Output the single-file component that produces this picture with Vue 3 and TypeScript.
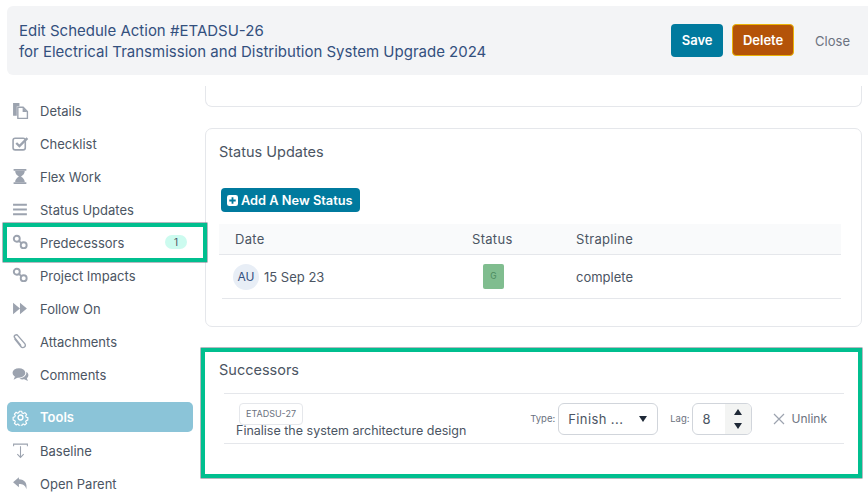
<script setup lang="ts">
interface NavItem {
  label: string
  icon: string
  badge?: string
  marked?: boolean
  active?: boolean
  gap?: boolean
}

const navItems: NavItem[] = [
  { label: 'Details', icon: 'files' },
  { label: 'Checklist', icon: 'check' },
  { label: 'Flex Work', icon: 'hourglass' },
  { label: 'Status Updates', icon: 'bars' },
  { label: 'Predecessors', icon: 'link', badge: '1', marked: true },
  { label: 'Project Impacts', icon: 'link' },
  { label: 'Follow On', icon: 'forward' },
  { label: 'Attachments', icon: 'clip' },
  { label: 'Comments', icon: 'comments' },
  { label: 'Tools', icon: 'cog', active: true, gap: true },
  { label: 'Baseline', icon: 'baseline' },
  { label: 'Open Parent', icon: 'reply' }
]
</script>

<template>
  <div class="page">
    <header class="head">
      <div class="head-title">
        <div>Edit Schedule Action #ETADSU-26</div>
        <div>for Electrical Transmission and Distribution System Upgrade 2024</div>
      </div>
      <div class="head-actions">
        <button class="btn save">Save</button>
        <button class="btn delete">Delete</button>
        <button class="btn close">Close</button>
      </div>
    </header>

    <div class="body">
      <nav class="side">
        <a
          v-for="item in navItems"
          :key="item.label"
          class="nav"
          :class="{ active: item.active, marked: item.marked, gap: item.gap }"
        >
          <svg class="ico" viewBox="0 0 16 16" aria-hidden="true">
            <template v-if="item.icon === 'files'">
              <path d="M1 1h6v3H4.500v9H1z" fill="currentColor" />
              <path d="M5.500 5h5l4 4v6.500h-9z" fill="none" stroke="currentColor" stroke-width="1.300" />
              <path d="M10 5v4.500h4.500" fill="currentColor" />
            </template>
            <template v-else-if="item.icon === 'check'">
              <rect x="1" y="3" width="11.500" height="11" rx="2" fill="none" stroke="currentColor" stroke-width="1.500" />
              <path d="M4 7.500l3 3 7.500-7.500" fill="none" stroke="currentColor" stroke-width="2.200" />
            </template>
            <template v-else-if="item.icon === 'hourglass'">
              <path d="M1.500 1h12v1.500h-12zM1.500 13.500h12V15h-12z" fill="currentColor" />
              <path d="M3 2.500h9C12 6 9.500 7 8.500 8c1 1 3.500 2 3.500 5.500H3C3 10 5.500 9 6.500 8 5.500 7 3 6 3 2.500z" fill="currentColor" />
            </template>
            <template v-else-if="item.icon === 'bars'">
              <path d="M1 2.500h13v2H1zM1 7h13v2H1zM1 11.500h13v2H1z" fill="currentColor" />
            </template>
            <template v-else-if="item.icon === 'link'">
              <circle cx="4.500" cy="4.500" r="2.800" fill="none" stroke="currentColor" stroke-width="1.800" />
              <circle cx="11" cy="10.500" r="2.800" fill="none" stroke="currentColor" stroke-width="1.800" />
              <path d="M6.500 6.500l2.500 2.300" stroke="currentColor" stroke-width="1.800" />
            </template>
            <template v-else-if="item.icon === 'forward'">
              <path d="M1 2.500l6.500 5.500L1 13.500zM7.500 2.500L14 8l-6.500 5.500z" fill="currentColor" />
            </template>
            <template v-else-if="item.icon === 'clip'">
              <path d="M4 5.500l6 7.500a2.300 2.300 0 0 0 3.500-3L7 2.500A1.700 1.700 0 0 0 4 4.500l6 7.500" fill="none" stroke="currentColor" stroke-width="1.300" transform="translate(-1.500 0)" />
            </template>
            <template v-else-if="item.icon === 'comments'">
              <ellipse cx="6.500" cy="6.500" rx="6" ry="4.500" fill="currentColor" />
              <path d="M3 9.500L1.500 13 6 10.500zM13.500 5.500c2.500 1.500 2.500 4.500.5 6l1 2.500-3.500-1.500c-2 .3-3.500 0-4.500-.8 3.500 0 7-2.500 6.500-6.200z" fill="currentColor" />
            </template>
            <template v-else-if="item.icon === 'cog'">
              <circle cx="8" cy="8" r="2.300" fill="none" stroke="currentColor" stroke-width="1.300" />
              <path d="M6.700 1.500h2.600l.4 1.800 1.300.6 1.600-1 1.800 1.900-1 1.500.6 1.400 1.700.4v2.600l-1.700.4-.6 1.300 1 1.600-1.800 1.800-1.600-1-1.300.6-.4 1.700H6.700l-.4-1.700-1.300-.6-1.600 1-1.800-1.800 1-1.600-.6-1.300-1.700-.4V7.700l1.700-.4.6-1.400-1-1.500 1.800-1.900 1.600 1 1.300-.6z" fill="none" stroke="currentColor" stroke-width="1.200" stroke-linejoin="round" transform="translate(.8 .8) scale(.9)" />
            </template>
            <template v-else-if="item.icon === 'baseline'">
              <path d="M1.500 4V2h13v2M8 4v10.500M5 11.500l3 3 3-3" fill="none" stroke="currentColor" stroke-width="1" />
            </template>
            <template v-else>
              <path d="M6.500 2L1 6.800l5.500 4.700V8.500c3.500 0 6 .8 7 5 1-5.500-1.500-9.500-7-9.500z" fill="currentColor" />
            </template>
          </svg>
          <span class="nav-label">{{ item.label }}</span>
          <span v-if="item.badge" class="badge">{{ item.badge }}</span>
        </a>
      </nav>

      <main class="main">
        <section class="card stub"></section>

        <section class="card status">
          <h2 class="card-title">Status Updates</h2>
          <button class="add">
            <svg class="add-ico" viewBox="0 0 12 12" aria-hidden="true">
              <rect width="12" height="12" rx="2.500" fill="#fff" />
              <path d="M6 2.500v7M2.500 6h7" stroke="#007a9e" stroke-width="2" />
            </svg>
            Add A New Status
          </button>
          <div class="table">
            <div class="row th">
              <span class="c-date head-date">Date</span>
              <span class="c-status">Status</span>
              <span class="c-strap">Strapline</span>
            </div>
            <div class="row td">
              <span class="c-date">
                <span class="avatar">AU</span>
                15 Sep 23
              </span>
              <span class="c-status"><span class="rag">G</span></span>
              <span class="c-strap">complete</span>
            </div>
          </div>
        </section>

        <section class="successors">
          <h2 class="card-title">Successors</h2>
          <div class="succ-row">
            <div class="succ-info">
              <span class="tag">ETADSU-27</span>
              <div class="succ-name">Finalise the system architecture design</div>
            </div>
            <div class="succ-controls">
              <span class="mini">Type:</span>
              <div class="select">
                <span>Finish ...</span>
                <i class="tri down"></i>
              </div>
              <span class="mini lag">Lag:</span>
              <div class="number">
                <span class="num-val">8</span>
                <span class="spin"><i class="tri up"></i><i class="tri down"></i></span>
              </div>
              <span class="unlink">
                <svg class="x" viewBox="0 0 12 12" aria-hidden="true">
                  <path d="M1 1l10 10M11 1L1 11" stroke="#9ca3af" stroke-width="1.200" />
                </svg>
                Unlink
              </span>
            </div>
          </div>
        </section>
      </main>
    </div>
  </div>
</template>

<style>
html, body { margin: 0; background: #fff; overflow: hidden; }
</style>

<style scoped>
.page {
  width: 868px;
  height: 498px;
  overflow: hidden;
  padding-top: 6px;
  box-sizing: border-box;
  font-family: Inter, "Liberation Sans", sans-serif;
  color: #4b5563;
  background: #fff;
}
.head {
  margin-left: 7px;
  height: 69px;
  box-sizing: border-box;
  background: #f3f4f6;
  border-radius: 6px 0 0 6px;
  display: flex;
  align-items: center;
  justify-content: space-between;
  padding: 0 18px 0 12px;
}
.head-title {
  font-size: 15px;
  line-height: 21px;
  color: #33507e;
}
.head-actions { display: flex; align-items: center; margin-top: -1px; }
.btn {
  font-family: inherit;
  font-size: 13px;
  border: 0;
  border-radius: 4px;
  padding: 0;
  font-weight: 600;
  color: #fff;
}
.save { width: 52px; height: 33px; background: #007a9e; }
.delete {
  width: 62px;
  height: 32px;
  margin-left: 9px;
  background: #b45309;
  border: 1px solid #eab308;
  box-sizing: border-box;
  margin-top: -1px;
}
.close {
  margin-left: 21px;
  background: none;
  color: #6b7280;
  font-weight: 400;
  margin-top: 2px;
}
.body { display: flex; }
.side {
  width: 205px;
  flex: none;
  padding-top: 19px;
  box-sizing: border-box;
}
.nav {
  display: flex;
  align-items: center;
  position: relative;
  height: 33px;
  padding-left: 12px;
  font-size: 13px;
  color: #4b5563;
}
.ico { width: 17px; height: 17px; color: #9ca3af; flex: none; margin-right: 11px; }
.nav.gap { margin-top: 11px; margin-bottom: 2px; height: 30px; }
.nav.active {
  margin-left: 7px;
  width: 186px;
  padding-left: 5px;
  box-sizing: border-box;
  background: #8bc4d8;
  border-radius: 5px;
  color: #fff;
  font-weight: 600;
}
.nav.active .ico { color: #fff; }
.nav.marked::after {
  content: "";
  position: absolute;
  left: 3px;
  width: 204px;
  top: -3px;
  height: 39px;
  box-sizing: border-box;
  border: 4px solid #00bf8f;
  box-shadow: 0 0 0 .5px #6b7280;
}
.badge {
  position: absolute;
  left: 165px;
  top: 9px;
  width: 22px;
  height: 14px;
  border-radius: 7px;
  background: #ccfbef;
  font-size: 10px;
  line-height: 14px;
  text-align: center;
}
.main { flex: 1; min-width: 0; padding-right: 6px; }
.card {
  border: 1px solid #e5e7eb;
  border-radius: 7px;
  box-sizing: border-box;
  background: #fff;
}
.stub {
  height: 21px;
  margin-top: 11px;
  border-top: 0;
  border-top-left-radius: 0;
  border-top-right-radius: 0;
}
.status {
  height: 199px;
  margin-top: 21px;
  padding: 13px 0 0 13px;
}
.card-title {
  margin: 0;
  font-size: 14.500px;
  line-height: 20px;
  font-weight: 400;
  color: #4b5563;
}
.add {
  display: flex;
  align-items: center;
  gap: 3px;
  margin: 26px 0 0 2px;
  height: 24px;
  width: 139px;
  padding: 0 0 0 6px;
  box-sizing: border-box;
  border: 0;
  border-radius: 4px;
  background: #007a9e;
  color: #fff;
  font-family: inherit;
  font-size: 12.800px;
  font-weight: 600;
  white-space: nowrap;
}
.add-ico { width: 11px; height: 11px; flex: none; }
.table { margin-top: 12px; width: 622px; font-size: 13px; }
.row { display: flex; align-items: center; }
.th {
  height: 30px;
  background: #f9fafb;
  border-bottom: 1px solid #e5e7eb;
  letter-spacing: .3px;
}
.td {
  height: 43px;
  margin-left: 3px;
  border-bottom: 1px solid #e5e7eb;
}
.c-date { display: flex; align-items: center; gap: 5px; width: 253px; padding-left: 12px; box-sizing: border-box; }
.td .c-date { width: 250px; padding-left: 11px; color: #4b5563; }
.th .c-date { padding-left: 16px; }
.c-status { width: 104px; }
.avatar {
  width: 26px;
  height: 26px;
  border-radius: 50%;
  background: #e8eef6;
  color: #33507e;
  font-size: 12px;
  line-height: 26px;
  text-align: center;
}
.rag {
  display: block;
  margin-left: 11px;
  width: 21px;
  height: 25px;
  border-radius: 2px;
  background: #80bd8f;
  color: #4a8a5e;
  font-size: 8.500px;
  line-height: 24px;
  text-align: center;
}
.successors {
  position: relative;
  margin: 21px -0px 0 -4px;
  width: 661px;
  height: 130px;
  box-sizing: border-box;
  border: 4px solid #00bf8f;
  box-shadow: 0 0 0 .5px #6b7280;
  padding: 8px 0 0 14px;
}
.successors .card-title { line-height: 20px; }
.succ-row {
  margin: 13px 14px 0 5px;
  height: 51px;
  box-sizing: border-box;
  border-top: 1px solid #e5e7eb;
  border-bottom: 1px solid #e5e7eb;
  display: flex;
  justify-content: space-between;
  align-items: center;
}
.succ-info { padding-left: 12px; padding-top: 4px; }
.tag {
  display: block;
  width: 64px;
  height: 22px;
  margin-left: 3px;
  box-sizing: border-box;
  border: 1px solid #e5e7eb;
  border-radius: 4px;
  font-size: 9px;
  line-height: 20px;
  text-align: center;
  color: #6b7280;
}
.succ-name { font-size: 12.500px; line-height: 16px; margin-top: -2px; }
.succ-controls { display: flex; align-items: center; padding-right: 17px; }
.mini { font-size: 9.500px; color: #6b7280; margin-right: 3px; }
.mini.lag { margin-left: 12px; }
.select, .number {
  height: 32px;
  box-sizing: border-box;
  border: 1px solid #d1d5db;
  border-radius: 6px;
  display: flex;
  align-items: center;
  font-size: 13px;
  letter-spacing: .4px;
}
.select { width: 100px; padding: 0 10px 0 9px; justify-content: space-between; }
.number { width: 60px; overflow: hidden; }
.num-val { width: 32px; padding-left: 9px; box-sizing: border-box; }
.spin {
  width: 26px;
  height: 100%;
  background: #f3f4f3;
  display: flex;
  flex-direction: column;
  align-items: center;
  justify-content: center;
  gap: 8px;
  margin-left: auto;
}
.tri {
  display: block;
  width: 0;
  height: 0;
  border-left: 4px solid transparent;
  border-right: 4px solid transparent;
}
.tri.down { border-top: 6px solid #1f2937; }
.tri.up { border-bottom: 6px solid #1f2937; }
.unlink {
  display: flex;
  align-items: center;
  gap: 6px;
  margin-left: 21px;
  font-size: 12px;
  color: #6b7280;
}
.x { width: 12px; height: 12px; }
</style>
